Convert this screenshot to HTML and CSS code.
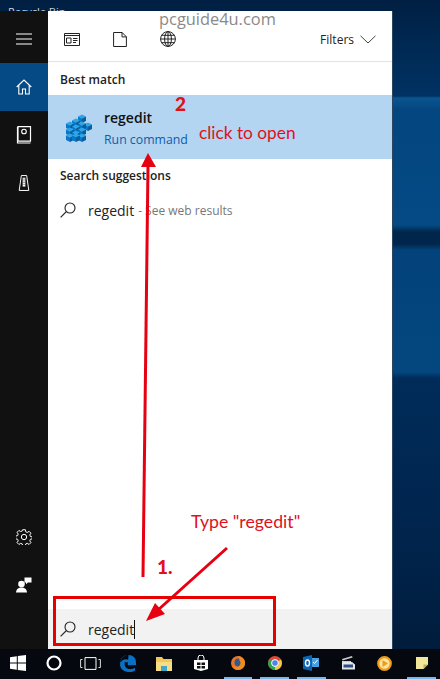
FILE: index.html
```html
<!DOCTYPE html>
<html lang="en">
<head>
    <meta charset="UTF-8">
    <meta name="viewport" content="width=device-width, initial-scale=1.0">
    <title>regedit search</title>
    <link rel="stylesheet" href="styles.css">
</head>
<body>
<div class="screen">
    <div class="desktop-top"><span>Recycle Bin</span></div>

    <div class="main">
        <!-- Left rail -->
        <div class="rail">
            <div class="rail-top">
                <div class="rail-item">
                    <svg width="16" height="12" viewBox="0 0 16 12"><path d="M0 1h16M0 6h16M0 11h16" stroke="#fff" stroke-width="1.2" fill="none"/></svg>
                </div>
                <div class="rail-item active">
                    <svg width="16" height="16" viewBox="0 0 16 16"><path d="M.7 8 8 1l7.300 7M2.800 6.500v8.500h3.700v-5h3v5h3.700V6.500" stroke="#fff" stroke-width="1.100" fill="none"/></svg>
                </div>
                <div class="rail-item">
                    <svg width="16" height="18" viewBox="0 0 16 18"><path d="M2 .6h12.500v14.500H2zM1.500 1v16h13" stroke="#fff" stroke-width="1.200" fill="none"/><circle cx="8" cy="5.500" r="2.300" stroke="#fff" stroke-width="1.100" fill="none"/></svg>
                </div>
                <div class="rail-item">
                    <svg width="12" height="16" viewBox="0 0 12 18"><path d="M3 .6h6l2.400 16.800H.6z" stroke="#fff" stroke-width="1.100" fill="none"/><path d="M4.500 3h3v10h-3z" fill="#fff"/><path d="M5.300 4v8M6.700 4v8" stroke="#111" stroke-width=".6" stroke-dasharray="1 1"/></svg>
                </div>
            </div>
            <div class="rail-bottom">
                <div class="rail-item">
                    <svg width="16" height="16" viewBox="0 0 18 18"><path d="M7.500.8h3l.5 2.400 1.700.7 2-1.300 2.100 2.100-1.300 2 .7 1.700 2.200.5v2.200l-2.200.5-.7 1.700 1.300 2-2.100 2.100-2-1.300-1.700.7-.5 2.400h-3l-.5-2.400-1.700-.7-2 1.300-2.100-2.100 1.300-2-.7-1.700-2.200-.5V7.900l2.200-.5.700-1.700-1.300-2 2.100-2.100 2 1.300 1.700-.7z" stroke="#fff" stroke-width="1.100" fill="none"/><circle cx="9" cy="9" r="3" stroke="#fff" stroke-width="1.100" fill="none"/></svg>
                </div>
                <div class="rail-item">
                    <svg width="16" height="16" viewBox="0 0 16 16"><circle cx="5.500" cy="7" r="3.300" fill="#fff"/><path d="M0 15.500c.3-3.600 2.500-5 5.500-5s5.200 1.400 5.500 5z" fill="#fff"/><path d="M8.500.5H15.500V5.500H12L10 7.300V5.500H8.500z" fill="#fff"/></svg>
                </div>
            </div>
        </div>

        <!-- Search panel -->
        <div class="panel">
            <div class="tabs">
                <svg class="tab-icon" width="16" height="13" viewBox="0 0 16 13"><path d="M.5.5h15v12H.5z" stroke="#222" fill="none"/><path d="M.5 2.500h15" stroke="#222"/><path d="M2.500 5h4.500v5H2.500z" stroke="#222" fill="none"/><path d="M9 5.500h4.500M9 7.500h4.500M9 9.500h3" stroke="#222"/></svg>
                <svg class="tab-icon" width="14" height="15" viewBox="0 0 14 15"><path d="M.6.5h8.500l4.300 4.300v9.700H.6zM9 .5v4.400h4.400" stroke="#222" fill="none"/></svg>
                <svg class="tab-icon" width="16" height="16" viewBox="0 0 16 16"><g stroke="#222" fill="none"><circle cx="8" cy="8" r="7.400"/><ellipse cx="8" cy="8" rx="3.400" ry="7.400"/><path d="M8 .6v14.800M.6 8h14.800M1.700 4.300h12.600M1.700 11.700h12.600"/></g></svg>
                <div class="filters">
                    <span>Filters</span>
                    <svg width="16" height="9" viewBox="0 0 16 9"><path d="M.5.8 8 8 15.500.8" stroke="#444" fill="none"/></svg>
                </div>
            </div>

            <div class="results">
                <div class="section-title first">Best match</div>
                <div class="best-row">
                    <svg class="cubes" width="28" height="30" viewBox="0 0 28 30">
                        <defs>
                            <g id="cube">
                                <path d="M0 2.500 4 .5l4 2-4 2z" fill="#2fa4e6"/>
                                <path d="M0 2.500l4 2V9L0 7z" fill="#0a78c8"/>
                                <path d="M8 2.500l-4 2V9l4-2z" fill="#05609f"/>
                            </g>
                        </defs>
                        <use href="#cube" x="14" y="2"/>
                        <use href="#cube" x="20" y="10"/>
                        <use href="#cube" x="8" y="6"/>
                        <use href="#cube" x="14" y="9"/>
                        <use href="#cube" x="2" y="9"/>
                        <use href="#cube" x="8" y="12"/>
                        <use href="#cube" x="14" y="15"/>
                        <use href="#cube" x="2" y="15"/>
                        <use href="#cube" x="8" y="18"/>
                        <use href="#cube" x="14" y="21"/>
                        <use href="#cube" x="2" y="21" />
                        <use href="#cube" x="8" y="21"/>
                    </svg>
                    <div>
                        <div class="best-name">regedit</div>
                        <div class="best-type">Run command</div>
                    </div>
                </div>
                <div class="section-title">Search suggestions</div>
                <div class="suggest-row">
                    <svg width="16" height="16" viewBox="0 0 16 16"><circle cx="10" cy="6" r="5" stroke="#222" stroke-width="1.100" fill="none"/><path d="M6.300 9.700.6 15.400" stroke="#222" stroke-width="1.200"/></svg>
                    <span class="suggest-text">regedit</span>
                    <span class="suggest-hint">- See web results</span>
                </div>
            </div>

            <div class="searchbox">
                <svg width="16" height="16" viewBox="0 0 16 16"><circle cx="10" cy="6" r="5" stroke="#222" stroke-width="1.100" fill="none"/><path d="M6.300 9.700.6 15.400" stroke="#222" stroke-width="1.200"/></svg>
                <span class="search-text">regedit</span><span class="caret"></span>
            </div>
        </div>
    </div>

    <!-- Taskbar -->
    <div class="taskbar">
        <div class="task start">
            <svg width="16" height="16" viewBox="0 0 16 16"><path d="M0 2.300 6.800 1.300v6.200H0zM7.800 1.100 16 0v7.500H7.800zM0 8.500h6.800v6.200L0 13.700zM7.800 8.500H16V16l-8.200-1.100z" fill="#fff"/></svg>
        </div>
        <div class="task">
            <svg width="16" height="16" viewBox="0 0 16 16"><circle cx="8" cy="8" r="6.500" stroke="#fff" stroke-width="2.200" fill="none"/></svg>
        </div>
        <div class="task">
            <svg width="21" height="13" viewBox="0 0 21 13"><path d="M5 .6h11v11.800H5z" stroke="#fff" fill="none"/><path d="M2.500 2.500H.6v8h1.900M18.500 2.500h1.900v8h-1.900" stroke="#ddd" fill="none"/></svg>
        </div>
        <div class="task">
            <svg width="16" height="17" viewBox="0 0 16 17"><path d="M8.500 0C3.800 0 .3 3.200 0 8c1.400-2.300 3.500-3.700 6-3.700 2 0 3.700 1 3.900 2.900H4.700C4.300 11.500 6.200 14 10 14c2 0 3.700-.5 5-1.300v3c-1.500.9-3.300 1.300-5.200 1.300C4.200 17 0 14.400 0 9 .3 3.500 4 0 8.500 0c4.400 0 7.500 2.800 7.500 7.500v2.700H7.800c0-1.300-.1-.7 0-1.500" fill="#0a70c4"/></svg>
        </div>
        <div class="task">
            <svg width="16" height="15" viewBox="0 0 16 15"><path d="M0 1h6l1.500 2H16v12H0z" fill="#f0c75e"/><path d="M0 6h16v9H0z" fill="#f8dc84"/><path d="M5 10h6v5H5z" fill="#3fa7c9"/></svg>
        </div>
        <div class="task">
            <svg width="14" height="16" viewBox="0 0 14 16"><path d="M0 5h14v9l-7 2-7-2z" fill="#fff"/><path d="M4 5V3a3 3 0 0 1 6 0v2" stroke="#fff" fill="none"/><path d="M3 7.500h3.500V10H3zM7.500 7.500H11V10H7.500zM3 11h3.500v2.500H3zM7.500 11H11v2.500H7.500z" fill="#111"/></svg>
        </div>
        <div class="task running">
            <svg width="14" height="14" viewBox="0 0 14 14"><circle cx="7" cy="7" r="7" fill="#e8752a"/><circle cx="7.500" cy="6.500" r="4" fill="#31598f"/><path d="M7 0c4 .5 7 3 7 7 0 3.800-3 7-7 7-3 0-5.500-1.800-6.500-4.500C2 11 4 11.500 6 11c2.200-.5 3.500-2.200 3.500-4 0-1.500-.6-2-1-2.500C8.500 3 8 1.500 7 0z" fill="#f08c1f"/></svg>
        </div>
        <div class="task running">
            <svg width="14" height="14" viewBox="0 0 14 14"><circle cx="7" cy="7" r="7" fill="#dd4b39"/><path d="M7 7 13 3.500A7 7 0 0 1 7 14z" fill="#f6c644"/><path d="M7 7v7A7 7 0 0 1 1 3.500z" fill="#2ea44f"/><circle cx="7" cy="7" r="3.400" fill="#4a86e8" stroke="#fff"/></svg>
        </div>
        <div class="task running">
            <svg width="16" height="16" viewBox="0 0 16 16"><path d="M8 3h8v9H8z" fill="#4aa0de"/><path d="m10 7 1.500 1.500L14.500 5" stroke="#fff" fill="none"/><path d="M0 2 9 0v16l-9-2z" fill="#0a64b4"/><ellipse cx="4.500" cy="8" rx="2" ry="3" fill="none" stroke="#fff" stroke-width="1.400"/></svg>
        </div>
        <div class="task">
            <svg width="15" height="14" viewBox="0 0 15 14"><path d="M1 3 11 0l.6 1.600-10 3zM1 5h9v1H1z" fill="#ccc"/><path d="M1 6h10l3 2.500v5H1z" fill="#e6e6e6"/><path d="M2.500 8.500h9.500v3H2.500z" fill="#2a4f8f"/></svg>
        </div>
        <div class="task">
            <svg width="15" height="15" viewBox="0 0 15 15"><circle cx="7.500" cy="7.500" r="6.300" fill="#fbe3a0" stroke="#f09b16" stroke-width="2.200"/><path d="M5.500 4 11 7.500 5.500 11z" fill="#f09b16"/></svg>
        </div>
        <div class="task running">
            <svg width="12" height="12" viewBox="0 0 12 12"><path d="M0 0h12v7.500L7.500 12H0z" fill="#f1e79b"/><path d="M12 7.500H7.500V12z" fill="#b8ad5c"/></svg>
        </div>
    </div>

    <!-- Annotations drawn over the screenshot -->
    <svg class="marks" width="440" height="679" viewBox="0 0 440 679">
        <path d="M143 577 148 165" stroke="#e60012" stroke-width="3" fill="none"/>
        <path d="M148 153 156 167H141z" fill="#e60012"/>
        <path d="M227 548 158 610" stroke="#e60012" stroke-width="3" fill="none"/>
        <path d="M146 621 155 603 165 614z" fill="#e60012"/>
        <rect x="54.500" y="597.500" width="220" height="47" stroke="#e60000" stroke-width="3" fill="none"/>
    </svg>
    <div class="watermark">pcguide4u.com</div>
    <div class="note note-two">2</div>
    <div class="note note-open">click to open</div>
    <div class="note note-type">Type "regedit"</div>
    <div class="note note-one">1.</div>
</div>
</body>
</html>
```

FILE: styles.css
```css
html, body {
    margin: 0;
    padding: 0;
}
body {
    font-family: "Open Sans", "Noto Sans", sans-serif;
    background-color: #002a55;
}
.screen {
    position: relative;
    width: 440px;
    height: 679px;
    overflow: hidden;
    display: flex;
    flex-direction: column;
    background: linear-gradient(180deg, #001f42 0, #002a55 50px, #003263 96px, #0a5590 98px, #04467f 110px, #044a85 225px, #00264c 232px, #00264c 244px, #03427a 250px, #04477f 372px, #002c5a 378px, #00234a 560px, #001c3c 649px);
}
.desktop-top {
    height: 11px;
    overflow: hidden;
    font-size: 11px;
    line-height: 24px;
    color: #c9d3de;
    padding-left: 8px;
}
.main {
    display: flex;
    height: 638px;
}
.rail {
    width: 48px;
    background: #111;
    display: flex;
    flex-direction: column;
    justify-content: space-between;
    padding-top: 4px;
    padding-bottom: 40px;
    box-sizing: border-box;
}
.rail-item {
    height: 48px;
    display: flex;
    align-items: center;
    justify-content: center;
}
.rail-item.active {
    background: #054a84;
}
.panel {
    width: 344px;
    background: #fff;
    display: flex;
    flex-direction: column;
    box-shadow: 1px 0 0 #2c4660;
}
.tabs {
    height: 51px;
    box-sizing: border-box;
    border-bottom: 1px solid #e3e3e3;
    display: flex;
    align-items: center;
    padding-top: 6px;
    padding-left: 16px;
}
.tab-icon {
    width: 16px;
    margin-right: 32px;
}
.filters {
    margin-left: auto;
    margin-right: 16px;
    display: flex;
    align-items: center;
    gap: 6px;
    font-size: 12px;
    color: #222;
}
.results {
    flex: 1;
}
.section-title {
    font-size: 12px;
    font-weight: 600;
    color: #222;
    line-height: 16px;
    padding: 9px 0 7px 12px;
}
.section-title.first {
    padding-top: 10px;
    padding-bottom: 7px;
}
.best-row {
    height: 64px;
    background: #b3d5f1;
    display: flex;
    align-items: center;
    padding-left: 16px;
    gap: 12px;
}
.best-name {
    font-size: 14px;
    font-weight: 600;
    color: #111;
    line-height: 20px;
    margin-top: 3px;
}
.best-type {
    font-size: 12.300px;
    color: #0f5cab;
    line-height: 20px;
    margin-top: 2px;
}
.suggest-row {
    display: flex;
    align-items: center;
    height: 36px;
    padding-left: 12px;
    padding-top: 2px;
    box-sizing: border-box;
}
.suggest-text {
    font-size: 14px;
    color: #222;
    margin-left: 12px;
}
.suggest-hint {
    font-size: 12px;
    color: #777;
    margin-left: 4px;
}
.searchbox {
    height: 40px;
    background: #f2f2f2;
    display: flex;
    align-items: center;
    padding-left: 12px;
    box-sizing: border-box;
}
.search-text {
    font-size: 14px;
    color: #222;
    margin-left: 12px;
}
.caret {
    width: 1px;
    height: 19px;
    background: #111;
}
.taskbar {
    height: 30px;
    background: #05090f;
    display: flex;
}
.task {
    position: relative;
    width: 37px;
    display: flex;
    align-items: center;
    justify-content: center;
    padding-bottom: 2px;
    box-sizing: border-box;
}
.task.start {
    width: 36px;
}
.task.running::after {
    content: "";
    position: absolute;
    left: 4px;
    right: 4px;
    bottom: 0;
    height: 2px;
    background: #76b9ed;
}
.marks {
    position: absolute;
    left: 0;
    top: 0;
}
.watermark {
    position: absolute;
    left: 159px;
    top: 8px;
    font-size: 16.400px;
    line-height: 22px;
    color: #8a8a8a;
}
.note {
    position: absolute;
    font-family: Lato, "Open Sans", sans-serif;
    color: #e0101c;
    white-space: nowrap;
}
.note-two {
    left: 175px;
    top: 93px;
    font-size: 19px;
    font-weight: 900;
    line-height: 22px;
}
.note-open {
    left: 199px;
    top: 122px;
    font-size: 17.300px;
    line-height: 22px;
}
.note-type {
    left: 191px;
    top: 511px;
    font-size: 17.700px;
    line-height: 22px;
}
.note-one {
    left: 157px;
    top: 556px;
    font-size: 19px;
    font-weight: 900;
    line-height: 22px;
}
```
